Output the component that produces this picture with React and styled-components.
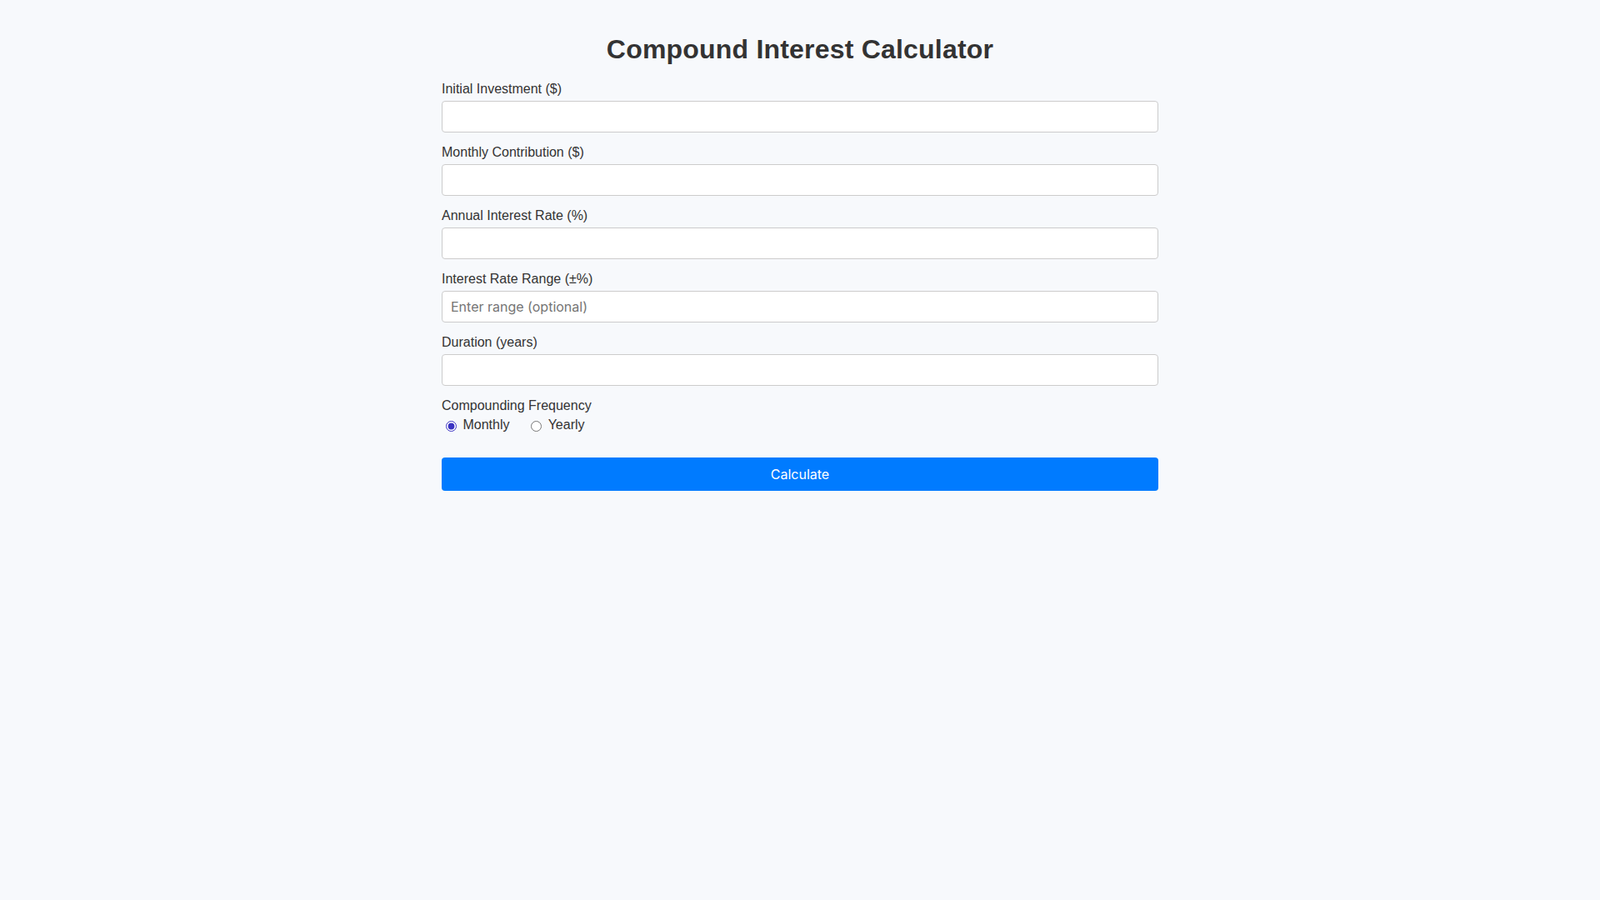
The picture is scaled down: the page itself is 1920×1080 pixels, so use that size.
import { useState } from "react";
import styled, { createGlobalStyle } from "styled-components";

const GlobalStyle = createGlobalStyle`
    body {
        margin: 0;
        background-color: #f7f9fc;
        font-family: "Liberation Sans", Arial, sans-serif;
        color: #333;
    }
`

const Container = styled.div`
    max-width: 860px;
    margin: 0 auto;
    padding: 20px;
`

const Titulo = styled.h1`
    text-align: center;
    font-size: 32px;
    font-weight: bold;
    letter-spacing: 0.2px;
    color: #333;
    margin: 21px 0 20px;
`

const Group = styled.div`
    margin-bottom: 15px;
`

const Label = styled.label`
    display: block;
    font-size: 16px;
    margin-bottom: 5px;
    color: #333;
`

const Input = styled.input`
    display: block;
    width: 100%;
    box-sizing: border-box;
    padding: 8px 10px;
    font-family: Inter, "Noto Sans", sans-serif;
    font-size: 16px;
    border: 1px solid #ccc;
    border-radius: 4px;
    background: #fff;
    color: #333;

    &::placeholder {
        color: #757575;
    }
`

const RadioRow = styled.div`
    display: flex;
    align-items: baseline;
`

const RadioLabel = styled.label`
    font-size: 16px;
    color: #333;
    margin-right: 21px;

    input {
        vertical-align: middle;
        margin-top: 2px;
        accent-color: #3a33c2;
    }
`

const Botao = styled.button`
    display: block;
    width: 100%;
    margin-top: 30px;
    padding: 10px;
    font-family: Inter, "Noto Sans", sans-serif;
    font-size: 16px;
    color: #fff;
    background-color: #007bff;
    border: none;
    border-radius: 4px;
    cursor: pointer;

    &:hover {
        background-color: #0069d9;
    }
`

const campos = [
    { name: "initial", label: "Initial Investment ($)" },
    { name: "monthly", label: "Monthly Contribution ($)" },
    { name: "rate", label: "Annual Interest Rate (%)" },
    { name: "range", label: "Interest Rate Range (±%)", placeholder: "Enter range (optional)" },
    { name: "years", label: "Duration (years)" },
]

export default function App() {
    const [form, setForm] = useState({ initial: "", monthly: "", rate: "", range: "", years: "" })
    const [frequency, setFrequency] = useState("monthly")

    const onChange = (e) => setForm({ ...form, [e.target.name]: e.target.value })

    return (
        <Container>
            <GlobalStyle />
            <Titulo>Compound Interest Calculator</Titulo>

            {campos.map((campo) => (
                <Group key={campo.name}>
                    <Label htmlFor={campo.name}>{campo.label}</Label>
                    <Input
                        id={campo.name}
                        type={"number"}
                        name={campo.name}
                        value={form[campo.name]}
                        onChange={onChange}
                        placeholder={campo.placeholder}
                    />
                </Group>
            ))}

            <Group>
                <Label>Compounding Frequency</Label>
                <RadioRow>
                    <RadioLabel>
                        <input
                            type={"radio"}
                            name={"frequency"}
                            checked={frequency === "monthly"}
                            onChange={() => setFrequency("monthly")}
                        /> Monthly
                    </RadioLabel>
                    <RadioLabel>
                        <input
                            type={"radio"}
                            name={"frequency"}
                            checked={frequency === "yearly"}
                            onChange={() => setFrequency("yearly")}
                        /> Yearly
                    </RadioLabel>
                </RadioRow>
            </Group>

            <Botao type={"button"}>Calculate</Botao>
        </Container>
    )
}
